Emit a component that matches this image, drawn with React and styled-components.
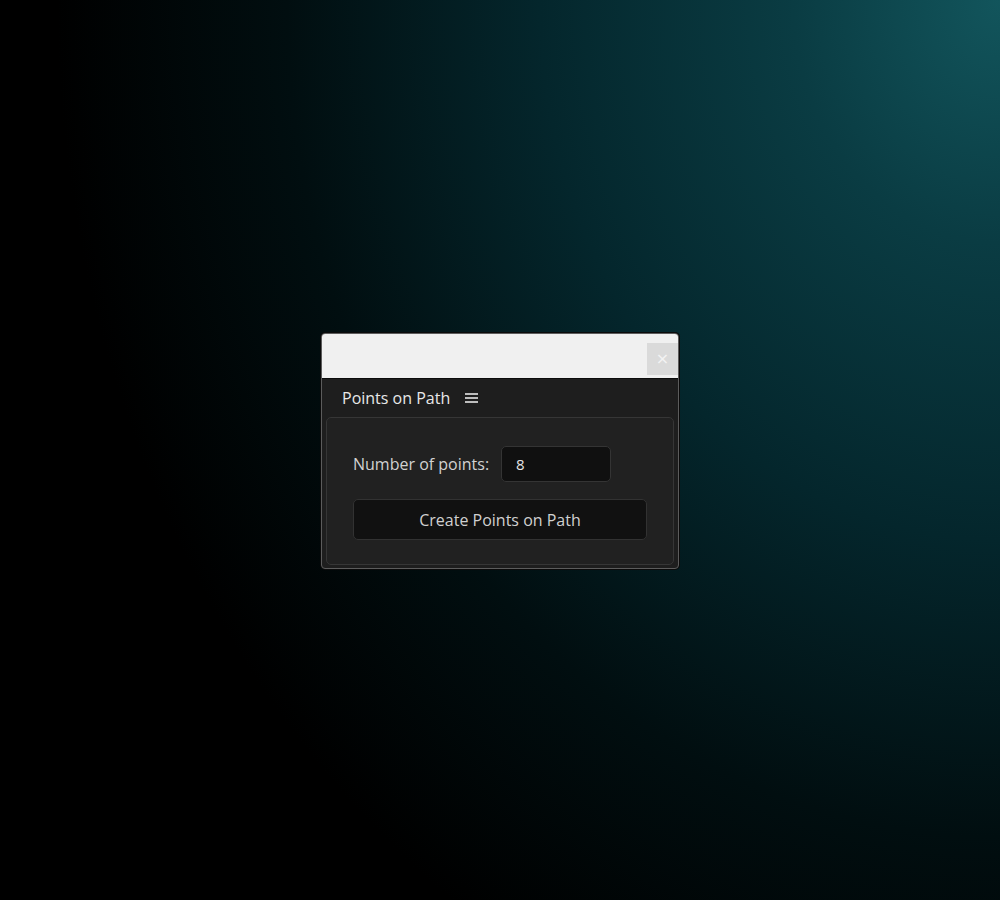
import styled, { createGlobalStyle } from 'styled-components';

const GlobalStyle = createGlobalStyle`
  html, body {
    margin: 0;
    padding: 0;
  }
  body {
    font-family: 'Open Sans', 'Noto Sans', sans-serif;
  }
`;

const Backdrop = styled.div`
  width: 1000px;
  height: 900px;
  display: flex;
  align-items: flex-start;
  justify-content: center;
  padding-top: 333px;
  box-sizing: border-box;
  background:
    radial-gradient(ellipse 1150px 1350px at 100% 0%, #12555c 0%, #0a3c43 18%, #04262c 40%, #010e10 62%, #000 82%);
`;

const Window = styled.div`
  width: 356px;
  border: 1px solid #5c5c5c;
  border-radius: 4px;
  overflow: hidden;
  background: #1e1e1e;
  box-shadow: 0 0 0 1px #0b0b0b;
`;

const TitleBar = styled.div`
  height: 45px;
  background: #f0f0f0;
  display: flex;
  justify-content: flex-end;
  align-items: flex-start;
  padding-top: 9px;
  box-sizing: border-box;
  border-bottom: 1px solid #0c0c0c;
`;

const CloseButton = styled.button`
  width: 31px;
  height: 32px;
  border: none;
  background: #dadada;
  color: #f3f3f3;
  font-size: 16px;
  line-height: 1;
  padding: 0;
  display: flex;
  align-items: center;
  justify-content: center;
  font-family: 'DejaVu Sans', sans-serif;
`;

const PanelHeader = styled.div`
  height: 38px;
  display: flex;
  align-items: center;
  gap: 15px;
  padding-left: 20px;
  color: #e8e8e8;
  font-size: 16px;
`;

const Card = styled.div`
  margin: 0 4px 3px 4px;
  border: 1px solid #363636;
  border-radius: 5px;
  background: #212121;
  padding: 28px 27px 24px 26px;
  display: flex;
  flex-direction: column;
  gap: 17px;
`;

const Row = styled.div`
  display: flex;
  align-items: center;
  gap: 12px;
`;

const Label = styled.span`
  color: #d2d2d2;
  font-size: 16px;
`;

const NumberInput = styled.input`
  width: 110px;
  height: 36px;
  box-sizing: border-box;
  background: #101010;
  border: 1px solid #343434;
  border-radius: 5px;
  color: #e6e6e6;
  font-family: inherit;
  font-size: 15px;
  padding: 0 14px;
  outline: none;
`;

const ActionButton = styled.button`
  width: 294px;
  height: 41px;
  background: #111111;
  border: 1px solid #323232;
  border-radius: 5px;
  color: #d0d0d0;
  font-family: inherit;
  font-size: 16px;
`;

const MenuIcon = () => (
  <svg width="13" height="12" viewBox="0 0 13 12">
    <rect x="0" y="1" width="13" height="2" fill="#bdbdbd" />
    <rect x="0" y="5" width="13" height="2" fill="#bdbdbd" />
    <rect x="0" y="9" width="13" height="2" fill="#bdbdbd" />
  </svg>
);

export default function App() {
  return (
    <Backdrop>
      <GlobalStyle />
      <Window>
        <TitleBar>
          <CloseButton>×</CloseButton>
        </TitleBar>
        <PanelHeader>
          <span>Points on Path</span>
          <MenuIcon />
        </PanelHeader>
        <Card>
          <Row>
            <Label>Number of points:</Label>
            <NumberInput defaultValue="8" />
          </Row>
          <ActionButton>Create Points on Path</ActionButton>
        </Card>
      </Window>
    </Backdrop>
  );
}
